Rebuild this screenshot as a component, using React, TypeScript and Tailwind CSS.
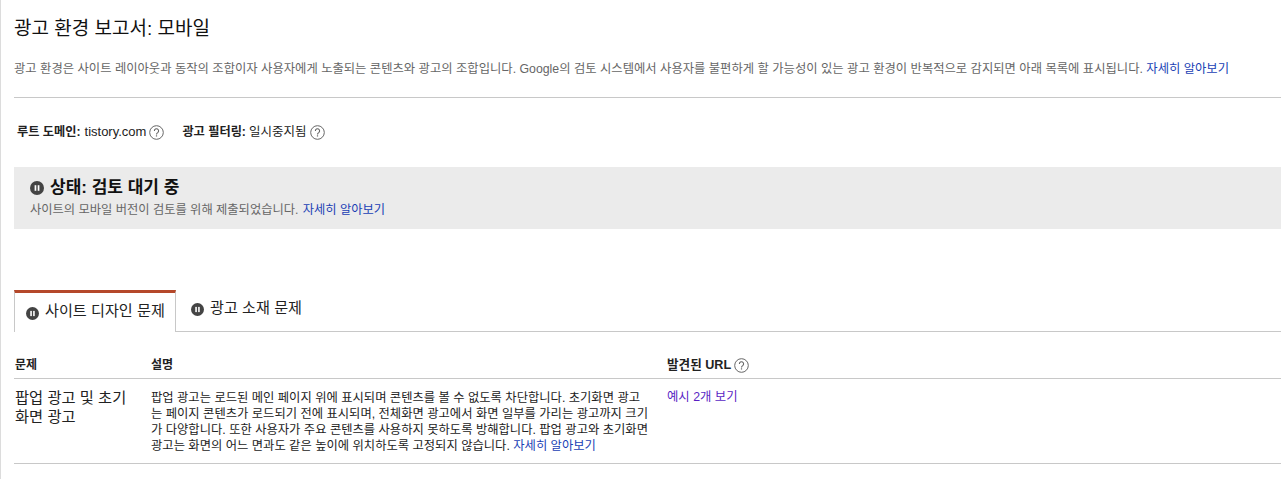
import React from "react";

function PauseIcon({ size = 14 }: { size?: number }) {
  return (
    <svg width={size} height={size} viewBox="0 0 14 14" className="shrink-0">
      <circle cx="7" cy="7" r="7" fill="#444" />
      <rect x="4.6" y="4.2" width="1.7" height="5.6" fill="#fff" />
      <rect x="7.7" y="4.2" width="1.7" height="5.6" fill="#fff" />
    </svg>
  );
}

function HelpIcon() {
  return (
    <svg width="15" height="15" viewBox="0 0 15 15" className="shrink-0">
      <circle cx="7.5" cy="7.5" r="6.8" fill="none" stroke="#666" strokeWidth="1" />
      <path d="M5.4 5.9a2.1 2.1 0 1 1 3.3 1.7c-.8.5-1.2.9-1.2 1.8" fill="none" stroke="#666" strokeWidth="1.1" />
      <rect x="6.9" y="10.3" width="1.2" height="1.2" fill="#666" />
    </svg>
  );
}

const LEARN = "자세히 알아보기";

export default function App() {
  return (
    <div className="h-[479px] overflow-hidden bg-white border-l border-[#dcdcdc] pl-[13px] font-['Liberation_Sans','Noto_Sans_CJK_KR',sans-serif] text-[#222]">
      <h1 className="pt-[18px] h-[50px] text-[19px] leading-[22px] text-[#111]">광고 환경 보고서: 모바일</h1>

      <p className="mt-[11px] text-[12.32px] leading-[16px] text-[#666] whitespace-nowrap">
        광고 환경은 사이트 레이아웃과 동작의 조합이자 사용자에게 노출되는 콘텐츠와 광고의 조합입니다. Google의 검토 시스템에서 사용자를 불편하게 할 가능성이 있는 광고 환경이 반복적으로 감지되면 아래 목록에 표시됩니다.{" "}
        <a className="text-[#1a3fb5]">{LEARN}</a>
      </p>

      <div className="mt-[20px] border-t border-[#c8c8c8]" />

      <div className="mt-[25px] h-[18px] pl-[3px] flex items-center text-[12.2px] leading-[16px]">
        <span className="font-bold mr-[4px]">루트 도메인:</span>
        <span className="mr-[3px] text-[13px]">tistory.com</span>
        <HelpIcon />
        <span className="font-bold ml-[18px] mr-[3px]">광고 필터링:</span>
        <span className="mr-[4px] text-[12.5px]">일시중지됨</span>
        <HelpIcon />
      </div>

      <div className="mt-[26px] h-[62px] bg-[#ebebeb] pl-[16px] pt-[11px]">
        <div className="flex items-center gap-[6px] h-[19px]">
          <PauseIcon />
          <span className="text-[17px] leading-[19px] font-bold text-[#111]">상태: 검토 대기 중</span>
        </div>
        <p className="mt-[5px] text-[12.25px] leading-[16px] text-[#666]">
          사이트의 모바일 버전이 검토를 위해 제출되었습니다. <a className="ml-[1px] text-[#1a3fb5]">{LEARN}</a>
        </p>
      </div>

      <div className="mt-[61px] h-[42px] flex border-b border-[#c8c8c8]">
        <div className="w-[162px] h-[42px] border-t-[3px] border-t-[#b5482a] border-x border-x-[#c8c8c8] bg-white pl-[11px] pt-[6px] flex items-start gap-[6px]">
          <span className="mt-[8px]"><PauseIcon size={13} /></span>
          <span className="text-[15.15px] leading-[24px]">사이트 디자인 문제</span>
        </div>
        <div className="pl-[15px] pt-[6px] flex items-start gap-[6px]">
          <span className="mt-[7px]"><PauseIcon size={13} /></span>
          <span className="text-[15.15px] leading-[24px]">광고 소재 문제</span>
        </div>
      </div>

      <div className="mt-[21px] h-[26px] pt-[4px] grid grid-cols-[136px_516px_1fr] border-b border-[#c8c8c8] pl-[1px] text-[12.6px] leading-[16px] font-bold">
        <span className="text-[12px]">문제</span>
        <span className="text-[12px]">설명</span>
        <span className="flex items-center gap-[3px] h-[16px]">발견된 URL <HelpIcon /></span>
      </div>

      <div className="h-[85px] grid grid-cols-[136px_516px_1fr] border-b border-[#c8c8c8] pl-[1px] pt-[9px]">
        <span className="text-[15.3px] leading-[19px] w-[120px]">팝업 광고 및 초기 화면 광고</span>
        <p className="mt-[2px] text-[12.3px] leading-[16px] w-[500px] whitespace-nowrap">
          팝업 광고는 로드된 메인 페이지 위에 표시되며 콘텐츠를 볼 수 없도록 차단합니다. 초기화면 광고
          <br />는 페이지 콘텐츠가 로드되기 전에 표시되며, 전체화면 광고에서 화면 일부를 가리는 광고까지 크기
          <br />가 다양합니다. 또한 사용자가 주요 콘텐츠를 사용하지 못하도록 방해합니다. 팝업 광고와 초기화면
          <br />광고는 화면의 어느 면과도 같은 높이에 위치하도록 고정되지 않습니다. <a className="text-[#1a3fb5]">{LEARN}</a>
        </p>
        <a className="mt-[1px] text-[12.35px] leading-[16px] text-[#5a1fc4]">예시 2개 보기</a>
      </div>
    </div>
  );
}
